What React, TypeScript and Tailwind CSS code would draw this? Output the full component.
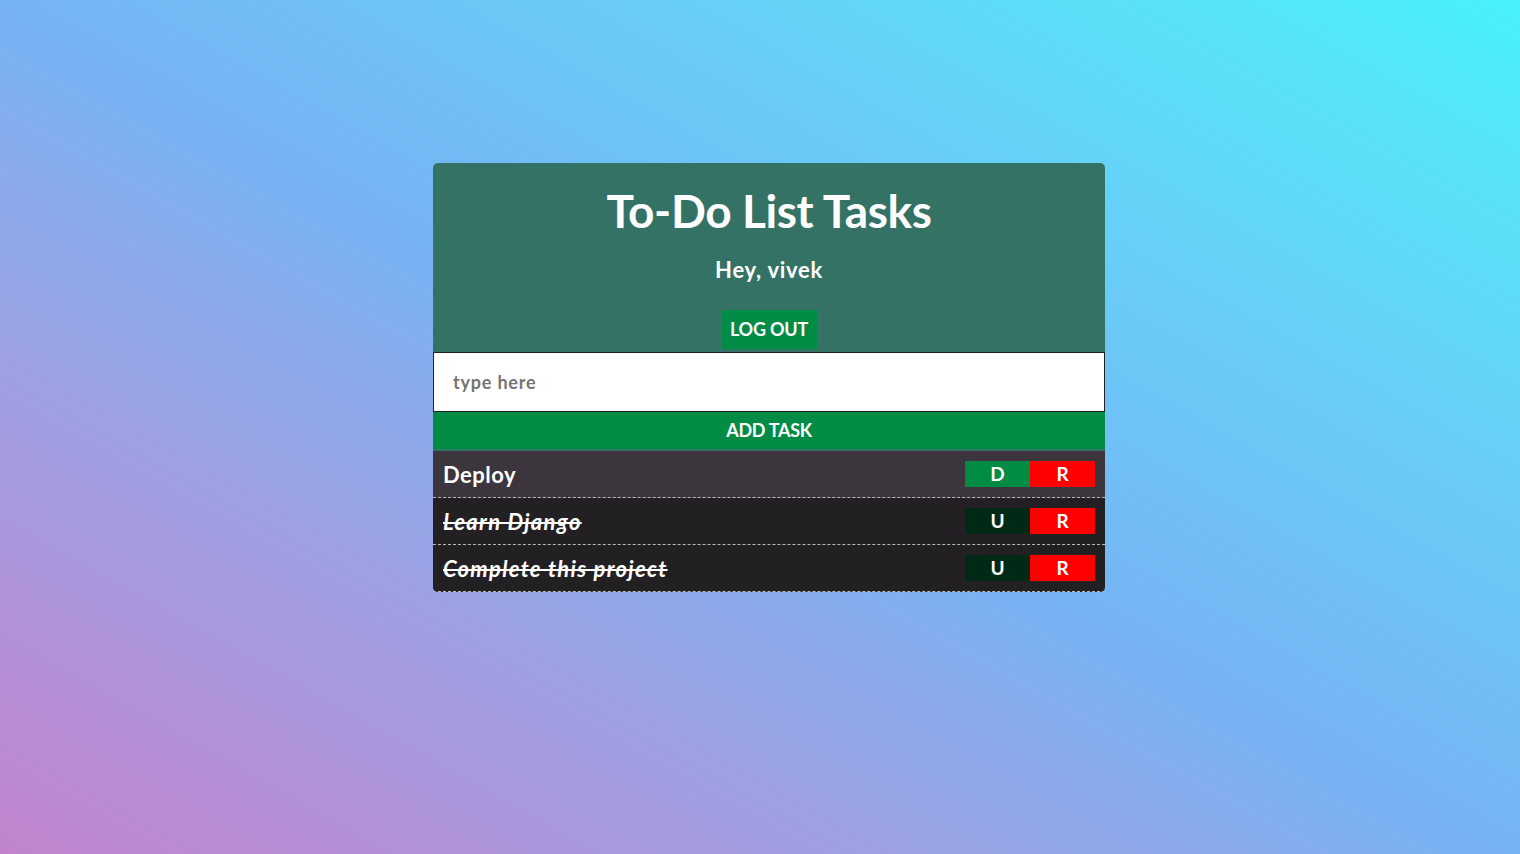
const tasks = [
    { title: "Deploy", completed: false },
    { title: "Learn Django", completed: true },
    { title: "Complete this project", completed: true },
];

const font = "font-['Lato','Liberation_Sans',sans-serif]";

const TaskRow = (props: { title: string; completed: boolean }) => {
    const { title, completed } = props;

    return (
        <div
            className={`flex h-[47px] items-center justify-between border-b border-dashed border-[#b9b9b9] pl-[10px] pr-[10px] ${
                completed ? "bg-[#232023]" : "bg-[#3c353e]"
            }`}
        >
            <span
                className={`text-[22px] font-bold text-white ${
                    completed ? "italic tracking-[1.3px] line-through" : "tracking-[0.5px]"
                }`}
            >
                {title}
            </span>

            <div className="flex">
                <button
                    className={`flex h-[26px] w-[65px] items-center justify-center text-[19px] font-bold text-white ${
                        completed ? "bg-[#002a16]" : "bg-[#008c45]"
                    }`}
                >
                    {completed ? "U" : "D"}
                </button>
                <button className="flex h-[26px] w-[65px] items-center justify-center bg-[#ff0000] text-[19px] font-bold text-white">
                    R
                </button>
            </div>
        </div>
    );
};

export default function App() {
    return (
        <div
            className={`flex h-[854px] w-full items-start justify-center bg-gradient-to-tr from-[#c183cc] via-[#75b3f4] to-[#47f0fa] pl-[18px] pt-[163px] ${font}`}
        >
            <div className="w-[672px] overflow-hidden rounded-[5px] bg-[#347265]">
                <div className="flex flex-col items-center pt-[22px]">
                    <h1 className="text-[46px] font-bold leading-[52px] tracking-[-0.4px] text-white">
                        To-Do List Tasks
                    </h1>
                    <p className="mt-[18px] text-[22px] font-bold leading-[30px] tracking-[0.7px] text-white">
                        Hey, vivek
                    </p>
                    <button className="mt-[25px] mb-[3px] h-[39px] w-[95px] bg-[#008c45] text-[18px] font-bold tracking-[-0.2px] text-white">
                        LOG OUT
                    </button>
                </div>

                <input
                    className="block h-[60px] w-full border border-[#222] bg-white px-[19px] text-[18px] font-bold tracking-[0.8px] text-[#333] outline-none placeholder:text-[#757575]"
                    placeholder="type here"
                />
                <button className="block h-[37px] w-full bg-[#008c45] text-[18px] font-bold tracking-[-0.3px] text-white">
                    ADD TASK
                </button>

                <div className="mt-[2px]">
                    {tasks.map((task) => (
                        <TaskRow key={task.title} title={task.title} completed={task.completed} />
                    ))}
                </div>
            </div>
        </div>
    );
}
